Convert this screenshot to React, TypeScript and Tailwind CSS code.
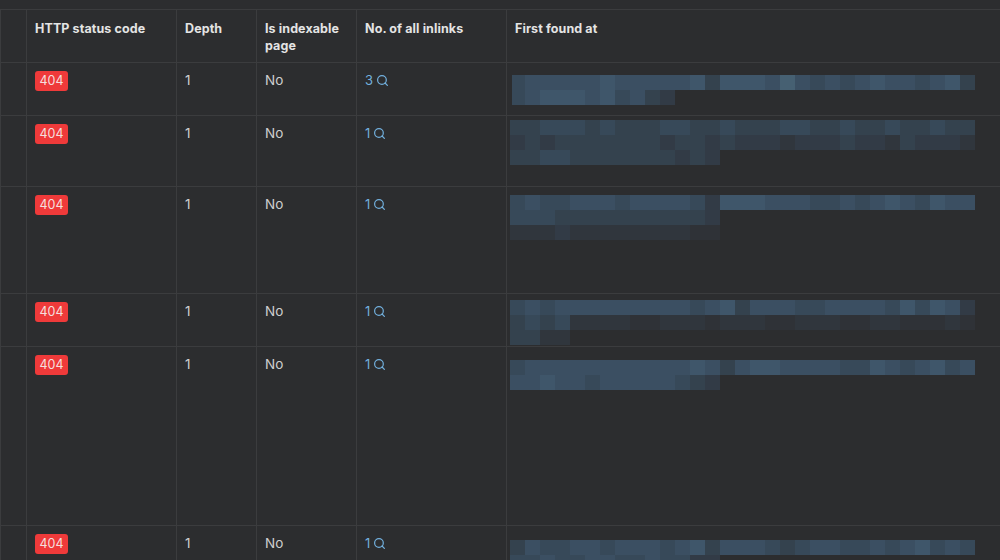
import { Search } from 'lucide-react';

// 打码块的调色板：a 最亮，h 几乎融入背景
const palette: Record<string, string> = {
  a: '#466072',
  b: '#3f566a',
  c: '#3b4f62',
  d: '#374959',
  e: '#34424e',
  f: '#323b46',
  g: '#30363d',
  h: '#2f3237',
};

type Row = {
  height: number;
  count: number;
  inset: number;
  offsetY: number;
  lines: string[];
};

const rows: Row[] = [
  {
    height: 53,
    count: 3,
    inset: 2,
    offsetY: 12,
    lines: ['dcccccbcccccbebbbcacdcdcbccdcbe', 'dcbbbcbdcef'],
  },
  {
    height: 71,
    count: 1,
    inset: 0,
    offsetY: 4,
    lines: ['eedddedeeeddeedeeeddeedeedeedee', 'fefeeeeeeefeefefffgfffeffgefffg', 'eeddeeeeeeefef'],
  },
  {
    height: 107,
    count: 1,
    inset: 0,
    offsetY: 8,
    lines: ['dcddcccdccccdfbbbcccddcdcbcdbcc', 'dddeeeeeeeeeef', 'gggfgggggggghh'],
  },
  {
    height: 53,
    count: 1,
    inset: 0,
    offsetY: 6,
    lines: ['dcdcccccccccdcbecccddccccdbdbcf', 'ededgggghhggghggghhggghhgghhhgh', 'eegg'],
  },
  {
    height: 179,
    count: 1,
    inset: 0,
    offsetY: 13,
    lines: ['dcccccccccccbcecbbccccddbcdcbdc', 'ccbccdcccccdef'],
  },
  {
    height: 35,
    count: 1,
    inset: 0,
    offsetY: 14,
    lines: ['ecddccdcccdcbecccdedccddcdcbdcd', 'ddcddccddcddff'],
  },
];

function Mosaic({ lines, inset }: { lines: string[]; inset: number }) {
  return (
    <div className="flex flex-col">
      {lines.map((line, i) => (
        <div key={i} className="flex h-[15px]">
          {line.split('').map((c, j) => (
            <span
              key={j}
              className="h-full shrink-0"
              style={{ backgroundColor: palette[c], width: j === 0 ? 15 - inset : 15 }}
            />
          ))}
        </div>
      ))}
    </div>
  );
}

const thClass = 'border border-[#3b3c3e] px-2 pt-[10px] align-top text-left text-[12.5px] leading-[17px] font-bold tracking-[0.1px] text-[#e4e4e4]';
const tdClass = 'border border-[#3b3c3e] px-2 pt-[7px] align-top text-[13.5px] leading-5 text-[#cfcfcf]';

export default function App() {
  return (
    <div className="h-[560px] w-[1000px] overflow-hidden bg-[#2c2d2f] pt-[9px] font-['Inter','Liberation_Sans',sans-serif]">
      <table className="w-[1001px] table-fixed border-collapse">
        <colgroup>
          <col className="w-[26px]" />
          <col className="w-[150px]" />
          <col className="w-[80px]" />
          <col className="w-[100px]" />
          <col className="w-[150px]" />
          <col />
        </colgroup>
        <thead>
          <tr className="h-[53px]">
            <th className={thClass} />
            <th className={thClass}>HTTP status code</th>
            <th className={thClass}>Depth</th>
            <th className={thClass}>Is indexable page</th>
            <th className={thClass}>No. of all inlinks</th>
            <th className={thClass}>First found at</th>
          </tr>
        </thead>
        <tbody>
          {rows.map((row, i) => (
            <tr key={i} style={{ height: row.height }}>
              <td className={tdClass} />
              <td className="border border-[#3b3c3e] px-2 pt-2 align-top">
                <span className="flex h-5 w-[33px] items-center justify-center rounded-[3px] bg-[#ef3a3a] text-[12.5px] text-[#f5dede]">
                  404
                </span>
              </td>
              <td className={tdClass}>1</td>
              <td className={tdClass}>No</td>
              <td className={tdClass}>
                <span className="flex h-5 items-center gap-[3px] text-[13px] text-[#72b0de]">
                  {row.count}
                  <Search size={13} strokeWidth={2.25} />
                </span>
              </td>
              <td className="overflow-hidden border border-[#3b3c3e] p-0 align-top">
                <div style={{ paddingLeft: 3 + row.inset, paddingTop: row.offsetY }}>
                  <Mosaic lines={row.lines} inset={row.inset} />
                </div>
              </td>
            </tr>
          ))}
        </tbody>
      </table>
    </div>
  );
}
